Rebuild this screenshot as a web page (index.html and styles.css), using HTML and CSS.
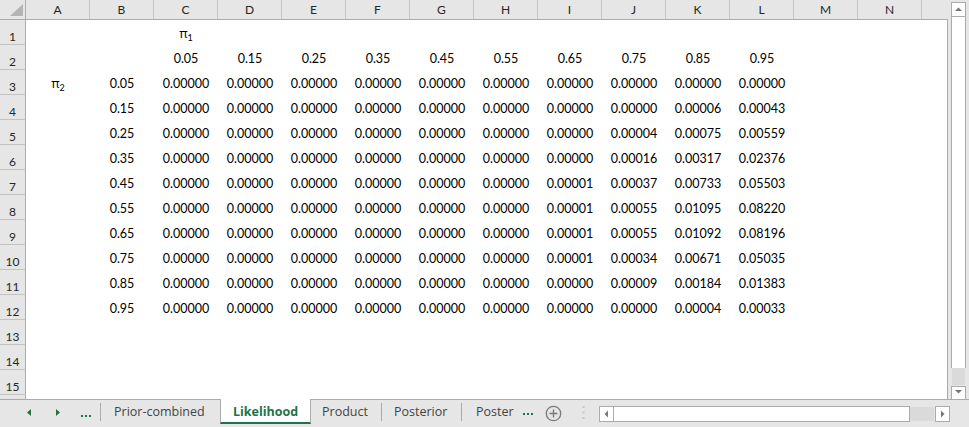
FILE: index.html
```html
<!DOCTYPE html>
<html>
<head>
<meta charset="utf-8">
<link rel="stylesheet" href="styles.css">
</head>
<body>
<div class="top">
  <div class="sheet">
    <div class="hdr">
      <div class="corner"><svg width="25" height="19" viewBox="0 0 25 19"><polygon points="23,4 23,16 10,16" fill="#b5b5b5"/></svg></div>
      <div>A</div><div>B</div><div>C</div><div>D</div><div>E</div><div>F</div><div>G</div><div>H</div><div>I</div><div>J</div><div>K</div><div>L</div><div>M</div><div>N</div><div class="last"></div>
    </div>
    <div class="row"><div class="rh">1</div><div class="c"></div><div class="c"></div><div class="c"><span class="pi">π<sub>1</sub></span></div></div>
    <div class="row"><div class="rh">2</div><div class="c"></div><div class="c"></div><div class="c">0.05</div><div class="c">0.15</div><div class="c">0.25</div><div class="c">0.35</div><div class="c">0.45</div><div class="c">0.55</div><div class="c">0.65</div><div class="c">0.75</div><div class="c">0.85</div><div class="c">0.95</div></div>
    <div class="row"><div class="rh">3</div><div class="c"><span class="pi">π<sub>2</sub></span></div><div class="c">0.05</div><div class="c">0.00000</div><div class="c">0.00000</div><div class="c">0.00000</div><div class="c">0.00000</div><div class="c">0.00000</div><div class="c">0.00000</div><div class="c">0.00000</div><div class="c">0.00000</div><div class="c">0.00000</div><div class="c">0.00000</div></div>
    <div class="row"><div class="rh">4</div><div class="c"></div><div class="c">0.15</div><div class="c">0.00000</div><div class="c">0.00000</div><div class="c">0.00000</div><div class="c">0.00000</div><div class="c">0.00000</div><div class="c">0.00000</div><div class="c">0.00000</div><div class="c">0.00000</div><div class="c">0.00006</div><div class="c">0.00043</div></div>
    <div class="row"><div class="rh">5</div><div class="c"></div><div class="c">0.25</div><div class="c">0.00000</div><div class="c">0.00000</div><div class="c">0.00000</div><div class="c">0.00000</div><div class="c">0.00000</div><div class="c">0.00000</div><div class="c">0.00000</div><div class="c">0.00004</div><div class="c">0.00075</div><div class="c">0.00559</div></div>
    <div class="row"><div class="rh">6</div><div class="c"></div><div class="c">0.35</div><div class="c">0.00000</div><div class="c">0.00000</div><div class="c">0.00000</div><div class="c">0.00000</div><div class="c">0.00000</div><div class="c">0.00000</div><div class="c">0.00000</div><div class="c">0.00016</div><div class="c">0.00317</div><div class="c">0.02376</div></div>
    <div class="row"><div class="rh">7</div><div class="c"></div><div class="c">0.45</div><div class="c">0.00000</div><div class="c">0.00000</div><div class="c">0.00000</div><div class="c">0.00000</div><div class="c">0.00000</div><div class="c">0.00000</div><div class="c">0.00001</div><div class="c">0.00037</div><div class="c">0.00733</div><div class="c">0.05503</div></div>
    <div class="row"><div class="rh">8</div><div class="c"></div><div class="c">0.55</div><div class="c">0.00000</div><div class="c">0.00000</div><div class="c">0.00000</div><div class="c">0.00000</div><div class="c">0.00000</div><div class="c">0.00000</div><div class="c">0.00001</div><div class="c">0.00055</div><div class="c">0.01095</div><div class="c">0.08220</div></div>
    <div class="row"><div class="rh">9</div><div class="c"></div><div class="c">0.65</div><div class="c">0.00000</div><div class="c">0.00000</div><div class="c">0.00000</div><div class="c">0.00000</div><div class="c">0.00000</div><div class="c">0.00000</div><div class="c">0.00001</div><div class="c">0.00055</div><div class="c">0.01092</div><div class="c">0.08196</div></div>
    <div class="row"><div class="rh">10</div><div class="c"></div><div class="c">0.75</div><div class="c">0.00000</div><div class="c">0.00000</div><div class="c">0.00000</div><div class="c">0.00000</div><div class="c">0.00000</div><div class="c">0.00000</div><div class="c">0.00001</div><div class="c">0.00034</div><div class="c">0.00671</div><div class="c">0.05035</div></div>
    <div class="row"><div class="rh">11</div><div class="c"></div><div class="c">0.85</div><div class="c">0.00000</div><div class="c">0.00000</div><div class="c">0.00000</div><div class="c">0.00000</div><div class="c">0.00000</div><div class="c">0.00000</div><div class="c">0.00000</div><div class="c">0.00009</div><div class="c">0.00184</div><div class="c">0.01383</div></div>
    <div class="row"><div class="rh">12</div><div class="c"></div><div class="c">0.95</div><div class="c">0.00000</div><div class="c">0.00000</div><div class="c">0.00000</div><div class="c">0.00000</div><div class="c">0.00000</div><div class="c">0.00000</div><div class="c">0.00000</div><div class="c">0.00000</div><div class="c">0.00004</div><div class="c">0.00033</div></div>
    <div class="row"><div class="rh">13</div></div>
    <div class="row"><div class="rh">14</div></div>
    <div class="row"><div class="rh">15</div></div>
    <div class="row stub"><div class="rh"></div></div>
  </div>
  <div class="vscroll">
    <div class="vbtn up"><svg width="13" height="13" viewBox="0 0 13 13"><polygon points="3,8 10,8 6.5,4.5" fill="#777"/></svg></div>
    <div class="vtrack"></div>
    <div class="vthumb"></div>
    <div class="vbtn down"><svg width="13" height="11" viewBox="0 0 13 11"><polygon points="3,3 10,3 6.5,6.5" fill="#777"/></svg></div>
  </div>
</div>
<div class="tabs">
  <svg class="nav" width="100" height="26" viewBox="0 0 100 26">
    <polygon points="31,9 27,12.5 31,16" fill="#217346"/>
    <polygon points="56,9 60,12.5 56,16" fill="#217346"/>
    <rect x="81" y="15" width="2" height="2" fill="#217346"/>
    <rect x="85" y="15" width="2" height="2" fill="#217346"/>
    <rect x="89" y="15" width="2" height="2" fill="#217346"/>
  </svg>
  <div class="sep"></div>
  <div class="tab t1">Prior-combined</div>
  <div class="tab active">Likelihood</div>
  <div class="tab t3">Product</div>
  <div class="sep"></div>
  <div class="tab t4">Posterior</div>
  <div class="sep"></div>
  <div class="tab t5">Poster<svg class="more" width="12" height="4" viewBox="0 0 12 4"><rect x="0" y="1" width="2" height="2" fill="#217346"/><rect x="4" y="1" width="2" height="2" fill="#217346"/><rect x="8" y="1" width="2" height="2" fill="#217346"/></svg></div>
  <svg class="add" width="17" height="17" viewBox="0 0 17 17"><circle cx="8.5" cy="8.5" r="7.2" fill="none" stroke="#7a7a7a" stroke-width="1.3"/><path d="M8.5 4.5v8M4.5 8.5h8" stroke="#7a7a7a" stroke-width="1.4"/></svg>
  <svg class="grip" width="3" height="15" viewBox="0 0 3 15"><rect x="0.5" y="1" width="2" height="2" fill="#c4c4c4"/><rect x="0.5" y="6.5" width="2" height="2" fill="#c4c4c4"/><rect x="0.5" y="12" width="2" height="2" fill="#c4c4c4"/></svg>
  <div class="hscroll">
    <div class="hbtn"><svg width="13" height="14" viewBox="0 0 13 14"><polygon points="8,3.5 8,10.5 4.5,7" fill="#777"/></svg></div>
    <div class="htrack"></div>
    <div class="hthumb"></div>
    <div class="hbtn right"><svg width="13" height="14" viewBox="0 0 13 14"><polygon points="5,3.5 5,10.5 8.5,7" fill="#777"/></svg></div>
  </div>
</div>
</body>
</html>
```
FILE: styles.css
```css
html, body {
  margin: 0;
  padding: 0;
}
body {
  width: 969px;
  height: 427px;
  overflow: hidden;
  background: #e6e6e6;
  font-family: Lato, "Liberation Sans", sans-serif;
  color: #000;
}
.top {
  display: flex;
  height: 399px;
}
.sheet {
  width: 948px;
  height: 399px;
  overflow: hidden;
  background: #fff;
  flex: none;
}
.hdr {
  display: grid;
  grid-template-columns: 26px repeat(14, 64px) 26px;
  height: 20px;
  box-sizing: border-box;
  background: #e6e6e6;
  border-bottom: 1px solid #ababab;
}
.hdr > div {
  border-right: 1px solid #c3c3c3;
  display: flex;
  align-items: center;
  justify-content: center;
  font-size: 12px;
  color: #262626;
}
.hdr > .corner {
  border-right-color: #ababab;
  align-items: flex-start;
  justify-content: flex-start;
}
.hdr > .last {
  border-right: none;
}
.row {
  display: grid;
  grid-template-columns: 26px repeat(12, 64px);
  height: 25px;
  width: 948px;
  box-sizing: border-box;
  border-right: 1px solid #ababab;
}
.row.stub {
  height: 4px;
}
.rh {
  background: #e6e6e6;
  border-right: 1px solid #ababab;
  border-bottom: 1px solid #c3c3c3;
  box-sizing: border-box;
  display: flex;
  align-items: center;
  justify-content: center;
  padding-top: 8px;
  font-size: 12px;
  color: #262626;
}
.stub .rh {
  border-bottom: none;
}
.c {
  display: flex;
  align-items: center;
  justify-content: center;
  padding-top: 1px;
  font-size: 12.5px;
}
.pi {
  font-family: "Open Sans", "DejaVu Sans", sans-serif;
  font-size: 13px;
}
.pi sub {
  font-size: 9px;
  vertical-align: -3px;
  font-family: Lato, sans-serif;
}
.vscroll {
  width: 21px;
  height: 399px;
  box-sizing: border-box;
  padding: 2px 3px 0 3px;
  display: flex;
  flex-direction: column;
  background: #e6e6e6;
}
.vbtn {
  height: 15px;
  box-sizing: border-box;
  border: 1px solid #ababab;
  background: #fff;
  display: flex;
  align-items: center;
  justify-content: center;
  flex: none;
}
.vbtn.down {
  height: 13px;
  border-bottom: none;
  align-items: flex-start;
}
.vtrack {
  flex: 1;
  background: #fff;
  border-left: 1px solid #ababab;
  border-right: 1px solid #ababab;
}
.vthumb {
  height: 17px;
  background: #dadada;
  margin: 0 1px 1px;
  flex: none;
}
.tabs {
  height: 28px;
  box-sizing: border-box;
  border-top: 1px solid #ababab;
  display: flex;
  align-items: flex-start;
  font-family: "Open Sans", "Liberation Sans", sans-serif;
  font-size: 12.5px;
  color: #444;
}
.nav {
  flex: none;
  display: block;
}
.sep {
  width: 1px;
  height: 18px;
  margin-top: 3px;
  background: #ababab;
  flex: none;
}
.tab {
  flex: none;
  box-sizing: border-box;
  height: 24px;
  line-height: 24px;
  white-space: nowrap;
}
.t1 {
  width: 119px;
  padding-left: 13px;
}
.active {
  width: 91px;
  margin-top: -1px;
  height: 25px;
  background: #fff;
  border-left: 1px solid #ababab;
  border-right: 1px solid #ababab;
  border-bottom: 2px solid #217346;
  text-align: center;
  font-weight: bold;
  color: #217346;
  line-height: 25px;
}
.t3 {
  width: 70px;
  padding-left: 11px;
}
.t4 {
  width: 79px;
  padding-left: 12px;
}
.t5 {
  width: 76px;
  padding-left: 14px;
}
.more {
  margin-left: 9px;
  vertical-align: 0;
}
.add {
  flex: none;
  margin-left: 7px;
  margin-top: 5px;
}
.grip {
  flex: none;
  margin-left: 20px;
  margin-top: 5px;
}
.hscroll {
  flex: none;
  width: 351px;
  height: 16px;
  margin-top: 6px;
  margin-left: 14px;
  display: flex;
}
.hbtn {
  width: 15px;
  height: 16px;
  box-sizing: border-box;
  border: 1px solid #ababab;
  background: #fff;
  display: flex;
  align-items: center;
  justify-content: center;
  flex: none;
}
.htrack {
  width: 296px;
  flex: none;
  box-sizing: border-box;
  background: #fff;
  border-top: 1px solid #ababab;
  border-bottom: 1px solid #ababab;
  border-right: 1px solid #ababab;
}
.hthumb {
  width: 24px;
  flex: none;
  margin: 1px 1px 1px 0;
  background: #dadada;
}
.hbtn.right {
  margin-left: 0;
}
```
